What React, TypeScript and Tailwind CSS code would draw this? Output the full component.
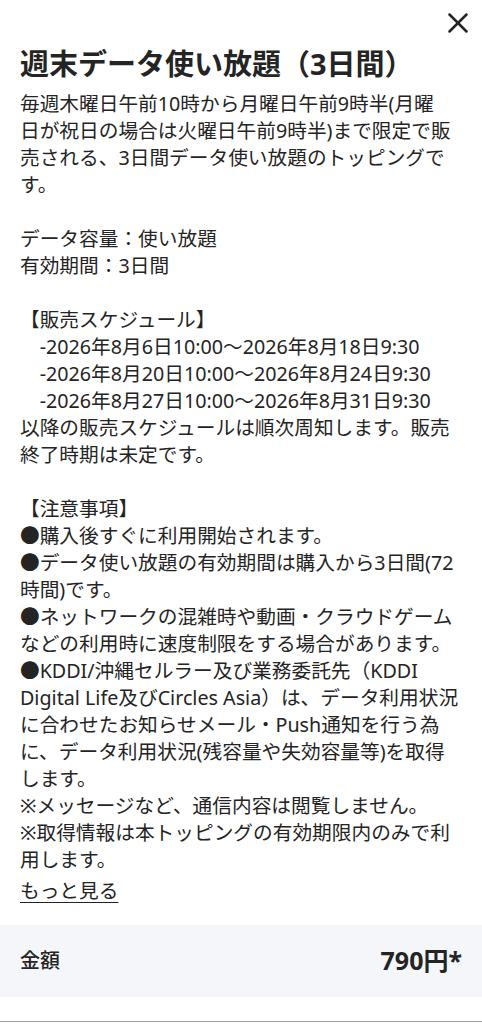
import { X } from "lucide-react";

const description = `毎週木曜日午前10時から月曜日午前9時半(月曜
日が祝日の場合は火曜日午前9時半)まで限定で販
売される、3日間データ使い放題のトッピングで
す。

データ容量：使い放題
有効期間：3日間

【販売スケジュール】
　-2026年8月6日10:00～2026年8月18日9:30
　-2026年8月20日10:00～2026年8月24日9:30
　-2026年8月27日10:00～2026年8月31日9:30
以降の販売スケジュールは順次周知します。販売
終了時期は未定です。

【注意事項】
●購入後すぐに利用開始されます。
●データ使い放題の有効期間は購入から3日間(72
時間)です。
●ネットワークの混雑時や動画・クラウドゲーム
などの利用時に速度制限をする場合があります。
●KDDI/沖縄セルラー及び業務委託先（KDDI
Digital Life及びCircles Asia）は、データ利用状況
に合わせたお知らせメール・Push通知を行う為
に、データ利用状況(残容量や失効容量等)を取得
します。
※メッセージなど、通信内容は閲覧しません。
※取得情報は本トッピングの有効期限内のみで利
用します。`;

export default function App() {
	return (
		<div
			className="w-[482px] bg-white text-[#242424]"
			style={{ fontFamily: '"Noto Sans", "Noto Sans CJK JP", sans-serif' }}
		>
			<div className="flex justify-end pt-[6px] pr-[7px]">
				<button className="w-[34px] h-[34px] flex items-center justify-center text-[#242424]">
					<X className="w-[34px] h-[34px]" strokeWidth={1.8} />
				</button>
			</div>

			<div className="pl-5 pr-2">
				<h1 className="mt-[4px] text-[29px] leading-[40px] font-bold">
					週末データ使い放題（3日間）
				</h1>

				<p className="mt-[6px] text-[19.7px] leading-[27px] whitespace-pre-wrap">
					{description}
				</p>

				<a className="inline-block mt-[4px] text-[19.7px] leading-[27px] underline underline-offset-[4px] decoration-1">
					もっと見る
				</a>
			</div>

			<div className="mt-[21px] h-[72px] bg-[#f5f6f9] px-5 flex items-center justify-between">
				<span className="text-[20px] font-medium">金額</span>
				<span className="text-[25px] font-bold">790円*</span>
			</div>

			<div className="h-[24px]" />
			<div className="h-px bg-[#a0a0a0]" />
		</div>
	);
}
